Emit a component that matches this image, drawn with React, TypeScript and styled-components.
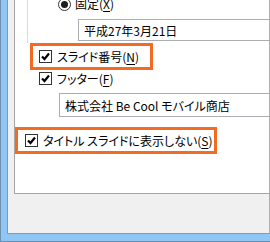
import styled, { createGlobalStyle } from 'styled-components';

const GlobalStyle = createGlobalStyle`
  html, body {
    margin: 0;
    padding: 0;
    overflow: hidden;
    background: #ffffff;
  }
  body {
    font-family: 'Noto Sans CJK JP', 'Noto Sans', sans-serif;
    font-size: 12px;
    color: #000000;
    font-feature-settings: 'palt' 1;
  }
`;

type TCheckProps = {
  label: string;
  keyChar: string;
};

const CheckIcon = () => (
  <CheckBox>
    <svg width="11" height="11" viewBox="0 0 11 11">
      <polyline points="2,5.5 4.5,8 9,2.5" fill="none" stroke="#000" strokeWidth="2.2" />
    </svg>
  </CheckBox>
);

const CheckItem = ({ label, keyChar }: TCheckProps) => (
  <>
    <CheckIcon />
    <Label>
      {label}(<u>{keyChar}</u>)
    </Label>
  </>
);

const App = () => {
  return (
    <>
      <GlobalStyle />
      <Frame>
        <Dialog>
          <Panel>
            <DateGroup>
              <RadioRow>
                <Radio />
                <Label>
                  固定(<u>X</u>)
                </Label>
              </RadioRow>
              <Field $indent={50} $top={3} $height={22}>
                平成27年3月21日
              </Field>
            </DateGroup>
            <Highlight $indent={15} $width={123} $pad={6}>
              <CheckItem label="スライド番号" keyChar="N" />
            </Highlight>
            <CheckRow>
              <CheckItem label="フッター" keyChar="F" />
            </CheckRow>
            <Field $indent={44} $top={6} $height={24}>
              株式会社 Be Cool モバイル商店
            </Field>
            <Highlight $indent={0} $width={202} $pad={7} $gap={10}>
              <CheckItem label="タイトル スライドに表示しない" keyChar="S" />
            </Highlight>
          </Panel>
        </Dialog>
      </Frame>
    </>
  );
};

export default App;

const Frame = styled.div`
  width: 270px;
  height: 242px;
  box-sizing: border-box;
  display: flex;
  background: #8ec6f6;
  border-left: 1px solid #6f8fab;
  border-bottom: 1px solid #6f8fab;
  padding: 0 0 7px 6px;
`;

const Dialog = styled.div`
  flex: 1;
  display: flex;
  flex-direction: column;
  background: #f0f0f0;
  border-left: 1px solid #7d9bb6;
  border-bottom: 1px solid #7d9bb6;
  border-right: 1px solid #adadad;
  padding-left: 6px;
`;

const Panel = styled.div`
  height: 194px;
  box-sizing: border-box;
  display: flex;
  flex-direction: column;
  background: #ffffff;
  border-left: 1px solid #a5a5a5;
  border-bottom: 1px solid #a5a5a5;
`;

const DateGroup = styled.div`
  height: 43px;
  box-sizing: border-box;
  margin-left: 12px;
  border-left: 1px solid #d9d9d9;
  display: flex;
  flex-direction: column;
`;

const RadioRow = styled.div`
  height: 24px;
  margin-top: -8px;
  margin-left: 30px;
  display: flex;
  align-items: center;
  gap: 4px;
`;

const Radio = styled.span`
  width: 13px;
  height: 13px;
  box-sizing: border-box;
  border-radius: 50%;
  border: 1px solid #333333;
  background: #ffffff;
  display: flex;
  align-items: center;
  justify-content: center;

  &::after {
    content: '';
    width: 7px;
    height: 7px;
    border-radius: 50%;
    background: #1e1e1e;
  }
`;

const Field = styled.div<{ $indent: number; $top: number; $height: number }>`
  height: ${({ $height }) => $height}px;
  box-sizing: border-box;
  margin: ${({ $top }) => $top}px 0 0 ${({ $indent }) => $indent}px;
  border: 1px solid #abadb3;
  border-right: 0;
  padding-left: 5px;
  display: flex;
  align-items: center;
  white-space: nowrap;
`;

const Highlight = styled.div<{ $indent: number; $width: number; $pad: number; $gap?: number }>`
  width: ${({ $width }) => $width}px;
  height: 27px;
  box-sizing: border-box;
  margin: ${({ $gap }) => $gap ?? 0}px 0 0 ${({ $indent }) => $indent}px;
  border: 3px solid #f26b23;
  padding-left: ${({ $pad }) => $pad}px;
  display: flex;
  align-items: center;
  gap: 5px;
  white-space: nowrap;
`;

const CheckRow = styled.div`
  height: 17px;
  margin-left: 24px;
  display: flex;
  align-items: center;
  gap: 5px;
`;

const CheckBox = styled.span`
  width: 13px;
  height: 13px;
  box-sizing: border-box;
  border: 1px solid #333333;
  background: #ffffff;
  display: flex;
  align-items: center;
  justify-content: center;
  flex-shrink: 0;
`;

const Label = styled.span`
  line-height: 16px;
  white-space: nowrap;

  u {
    text-decoration-thickness: 1px;
    text-underline-offset: 2px;
  }
`;
